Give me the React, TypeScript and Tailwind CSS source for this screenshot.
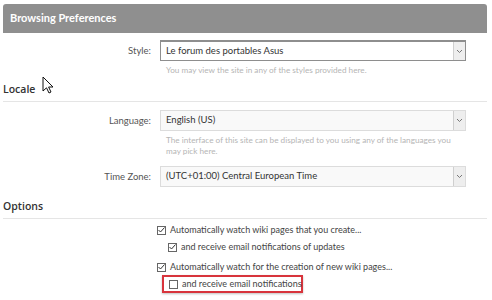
import React from 'react';

function Chevron() {
  return (
    <svg width="7" height="5" viewBox="0 0 7 5" fill="none">
      <path d="M1 1l2.5 2.5L6 1" stroke="#777" strokeWidth="1" />
    </svg>
  );
}

function Select({ value, focused }: { value: string; focused?: boolean }) {
  return (
    <div
      className={`flex h-[21px] w-[306px] items-stretch border ${
        focused ? 'border-[#8e8e8e] border-t-2 bg-white' : 'border-[#dcdcdc] bg-[#f9f9f9]'
      }`}
    >
      <div className="flex flex-1 items-center pl-[5px] font-['Lato',sans-serif] text-[9.5px] text-[#333]">{value}</div>
      <div className="flex w-[12px] items-center justify-center border-l border-[#cfcfcf] bg-[#eeeeee]">
        <Chevron />
      </div>
    </div>
  );
}

function Row({ label, children }: { label: string; children: React.ReactNode }) {
  return (
    <div className="flex gap-[9px]">
      <div className="w-[148px] pt-[4px] text-right font-['Lato',sans-serif] text-[9.5px] text-[#555]">{label}</div>
      <div className="flex flex-col">{children}</div>
    </div>
  );
}

function Hint({ children }: { children: React.ReactNode }) {
  return (
    <p className="mt-[4px] w-[300px] pl-[6px] font-['Lato',sans-serif] text-[8.2px] leading-[11px] text-[#b5b5b5]">
      {children}
    </p>
  );
}

function Check({ checked, label }: { checked: boolean; label: string }) {
  return (
    <label className="flex items-center gap-[4px] whitespace-nowrap font-['Lato',sans-serif] text-[9px] text-[#444]">
      <span className="flex h-[9px] w-[9px] shrink-0 items-center justify-center border border-[#666] bg-white">
        {checked && (
          <svg width="7" height="6" viewBox="0 0 7 6" fill="none">
            <path d="M0.5 3l2 2L6.5 0.5" stroke="#333" strokeWidth="1" />
          </svg>
        )}
      </span>
      {label}
    </label>
  );
}

function SectionTitle({ children }: { children: React.ReactNode }) {
  return (
    <div className="border-b border-[#e5e5e5] pb-[3px] text-[10.5px] font-semibold text-[#333]">{children}</div>
  );
}

export default function App() {
  return (
    <div className="relative h-[300px] w-[492px] overflow-hidden bg-white pl-[3px] pr-[5px] pt-[4px] font-['Open_Sans',sans-serif]">
      <div className="flex h-[29px] items-center rounded-t-[3px] bg-[#8f8f8f] pl-[7px] font-['Lato',sans-serif] text-[11px] font-bold text-white">
        Browsing Preferences
      </div>

      <div className="mt-[7px]">
        <Row label="Style:">
          <Select value="Le forum des portables Asus" focused />
          <Hint>You may view the site in any of the styles provided here.</Hint>
        </Row>
      </div>

      <div className="mt-[6px]">
        <SectionTitle>Locale</SectionTitle>
      </div>

      <div className="mt-[8px] flex flex-col gap-[9px]">
        <Row label="Language:">
          <Select value="English (US)" />
          <Hint>The interface of this site can be displayed to you using any of the languages you may pick here.</Hint>
        </Row>
        <Row label="Time Zone:">
          <Select value="(UTC+01:00) Central European Time" />
        </Row>
      </div>

      <div className="mt-[12px]">
        <SectionTitle>Options</SectionTitle>
      </div>

      <div className="mt-[3px] flex flex-col pl-[154px]">
        <div className="flex h-[17px] items-center">
          <Check checked label="Automatically watch wiki pages that you create..." />
        </div>
        <div className="flex h-[17px] items-center pl-[11px]">
          <Check checked label="and receive email notifications of updates" />
        </div>
        <div className="mt-[3px] flex h-[17px] items-center">
          <Check checked label="Automatically watch for the creation of new wiki pages..." />
        </div>
        <div className="flex h-[17px] items-center pl-[5px]">
          <div className="flex h-[18px] w-[141px] shrink-0 items-center border-2 border-[#d8343c] pl-[5px] shadow-[0_1px_2px_rgba(0,0,0,0.25)]">
            <Check checked={false} label="and receive email notifications" />
          </div>
        </div>
      </div>

      <svg className="absolute left-[42px] top-[76px]" width="12" height="18" viewBox="0 0 12 18">
        <path d="M1 1v14l3.5-3.2 2.5 5.2 2-1-2.4-5H11z" fill="white" stroke="#111" strokeWidth="1" strokeLinejoin="round" />
      </svg>
    </div>
  );
}
